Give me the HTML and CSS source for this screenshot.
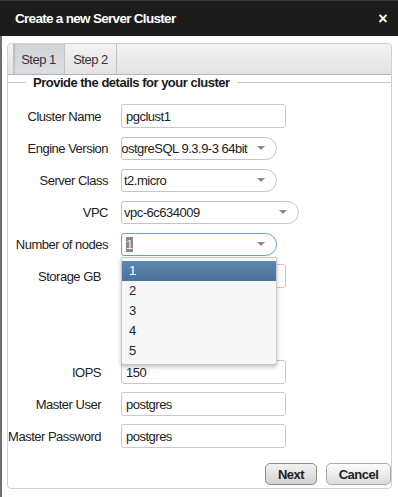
FILE: index.html
```html
<!DOCTYPE html>
<html lang="en">
<head>
    <meta charset="UTF-8">
    <title>Create a new Server Cluster</title>
    <link rel="stylesheet" href="styles.css">
</head>
<body>
    <div class="dialog">
        <div class="dialog-title">
            <span>Create a new Server Cluster</span>
            <span class="close">&times;</span>
        </div>
        <div class="dialog-body">
            <div class="panel">
                <div class="tabs">
                    <div class="tab active">Step 1</div>
                    <div class="tab">Step 2</div>
                </div>
                <div class="section-title">
                    <span class="line short"></span>
                    <span class="legend">Provide the details for your cluster</span>
                    <span class="line"></span>
                </div>
                <div class="form">
                    <label class="text-label">Cluster Name</label>
                    <div class="field"><input class="input" type="text" value="pgclust1"></div>

                    <label>Engine Version</label>
                    <div class="field">
                        <div class="select"><span class="value scrolled">PostgreSQL 9.3.9-3 64bit</span><span class="arrow"></span></div>
                    </div>

                    <label>Server Class</label>
                    <div class="field">
                        <div class="select"><span class="value">t2.micro</span><span class="arrow"></span></div>
                    </div>

                    <label>VPC</label>
                    <div class="field">
                        <div class="select wide"><span class="value">vpc-6c634009</span><span class="arrow"></span></div>
                    </div>

                    <label>Number of nodes</label>
                    <div class="field">
                        <div class="select focused"><span class="value"><span class="selected-text">1</span></span><span class="arrow"></span></div>
                        <ul class="dropdown">
                            <li class="highlighted">1</li>
                            <li>2</li>
                            <li>3</li>
                            <li>4</li>
                            <li>5</li>
                        </ul>
                    </div>

                    <label class="text-label">Storage GB</label>
                    <div class="field"><input class="input" type="text" value=""></div>

                    <div class="spacer"></div>

                    <label class="text-label">IOPS</label>
                    <div class="field"><input class="input" type="text" value="150"></div>

                    <label class="text-label">Master User</label>
                    <div class="field"><input class="input" type="text" value="postgres"></div>

                    <label class="text-label">Master Password</label>
                    <div class="field"><input class="input" type="text" value="postgres"></div>
                </div>
                <div class="buttons">
                    <button class="btn primary">Next</button>
                    <button class="btn cancel">Cancel</button>
                </div>
            </div>
        </div>
    </div>
</body>
</html>
```

FILE: styles.css
```css
body, html {
    margin: 0;
    font-family: "Liberation Sans", Arial, sans-serif;
    font-size: 13px;
    letter-spacing: -0.5px;
    color: #222;
    background: #fff;
}
.dialog {
    width: 398px;
    height: 497px;
    display: flex;
    flex-direction: column;
}
.dialog-title {
    height: 36px;
    box-sizing: border-box;
    border-top: 1px solid #3a3a3a;
    background-color: #1c1c1c;
    color: #fff;
    font-weight: bold;
    font-size: 13.5px;
    letter-spacing: -0.7px;
    display: flex;
    align-items: center;
    justify-content: space-between;
    padding: 0 11px 0 15px;
}
.close {
    font-size: 16px;
}
.dialog-body {
    flex: 1;
    border-left: 2px solid #707070;
    padding: 7px 6px 8px 5px;
    display: flex;
}
.panel {
    flex: 1;
    border: 1px solid #d0d0d0;
    border-radius: 4px;
    display: flex;
    flex-direction: column;
}
.tabs {
    height: 30px;
    display: flex;
    padding-left: 5px;
    background: linear-gradient(#f3f3f3, #e2e2e2);
    border-bottom: 1px solid #b5b5b5;
    border-radius: 4px 4px 0 0;
}
.tab {
    width: 52px;
    box-sizing: border-box;
    display: flex;
    align-items: center;
    justify-content: center;
    color: #333;
    border-right: 1px solid #c2c2c2;
}
.tab.active {
    background: linear-gradient(#d2d5d8, #dcdfe1);
    box-shadow: inset 2px 0 2px rgba(0, 0, 0, 0.12);
}
.section-title {
    height: 15px;
    display: flex;
    align-items: center;
}
.section-title .line {
    flex: 1;
    height: 1px;
    background: #c5cbcb;
}
.section-title .line.short {
    flex: none;
    width: 18px;
}
.legend {
    font-weight: bold;
    padding: 0 7px;
    color: #1a1a1a;
}
.form {
    margin-top: 10px;
    display: grid;
    grid-template-columns: 100px 1fr;
    grid-auto-rows: 32px;
    column-gap: 13px;
    align-items: center;
}
.form label {
    text-align: right;
    white-space: nowrap;
}
.form label.text-label {
    padding-right: 7px;
}
.spacer {
    grid-column: 1 / 3;
    grid-row: span 2;
}
.field {
    position: relative;
    display: flex;
}
.input {
    width: 165px;
    height: 24px;
    box-sizing: border-box;
    border: 1px solid #c8c8c8;
    border-radius: 3px;
    padding: 0 4px;
    font-family: inherit;
    font-size: 13px;
    letter-spacing: -0.5px;
    color: #222;
    background: #fff;
}
.select {
    width: 156px;
    height: 23px;
    box-sizing: border-box;
    border: 1px solid #c4c4c4;
    border-radius: 3px 12px 12px 3px;
    display: flex;
    align-items: center;
    overflow: hidden;
    background: #fff;
}
.select.wide {
    width: 178px;
}
.select.focused {
    border-color: #6a9fd0;
}
.select .value {
    flex: 1;
    padding-left: 2px;
    white-space: nowrap;
    overflow: hidden;
}
.select .value.scrolled {
    text-indent: -11px;
}
.selected-text {
    display: inline-block;
    width: 7px;
    margin-left: 2px;
    line-height: 15px;
    background: #8a8a8a;
    color: #eee;
}
.arrow {
    width: 0;
    height: 0;
    border-left: 4px solid transparent;
    border-right: 4px solid transparent;
    border-top: 4px solid #888;
    margin: 0 11px 0 6px;
}
.dropdown {
    position: absolute;
    top: 24px;
    left: 0;
    width: 156px;
    box-sizing: border-box;
    margin: 0;
    padding: 3px 0 3px;
    list-style: none;
    background: #f7f7f7;
    border: 1px solid #c8c8c8;
    border-radius: 0 0 3px 3px;
    box-shadow: 0 2px 4px rgba(0, 0, 0, 0.25);
    z-index: 2;
}
.dropdown li {
    height: 20px;
    line-height: 20px;
    padding-left: 7px;
}
.dropdown li.highlighted {
    background: linear-gradient(#5b88b0, #4a7199);
    color: #fff;
}
.buttons {
    margin-top: 11px;
    display: flex;
    justify-content: flex-end;
    gap: 9px;
}
.btn {
    height: 22px;
    box-sizing: border-box;
    padding: 0;
    font-family: inherit;
    font-size: 13px;
    font-weight: bold;
    letter-spacing: -0.5px;
    color: #222;
    background: linear-gradient(#fdfdfd, #dcdcdc);
    border: 1px solid #a8a8a8;
    border-radius: 5px;
}
.btn.primary {
    width: 52px;
    border-color: #8c8c8c;
    background: linear-gradient(#f2f2f2, #d2d2d2);
}
.btn.cancel {
    width: 65px;
}
```
